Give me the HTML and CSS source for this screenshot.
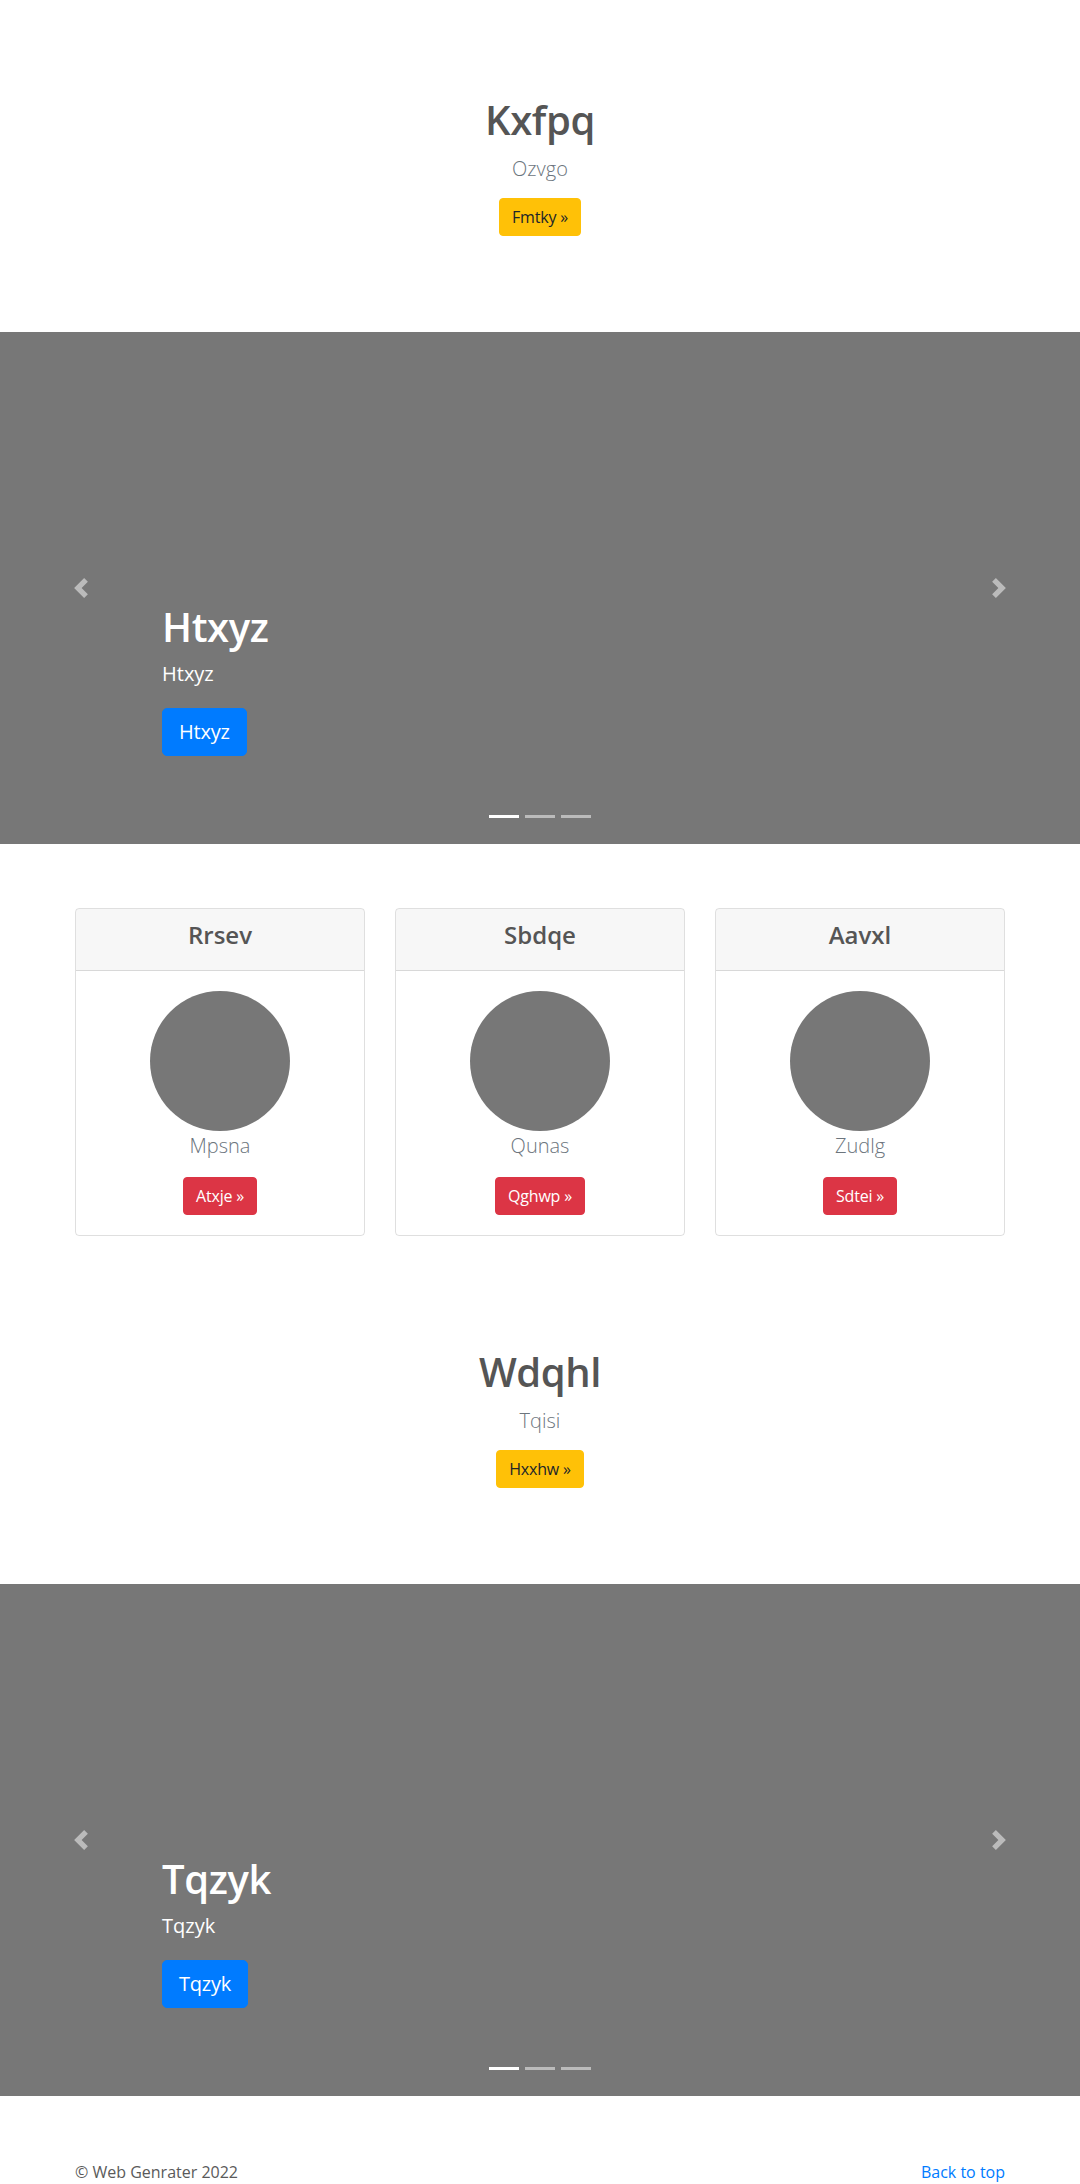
FILE: index.html
```html
<!DOCTYPE html>
<html lang="en">
<head>
<meta charset="utf-8">
<title>Web Genrater</title>
<link rel="stylesheet" href="styles.css">
</head>
<body>
<section class="hero">
  <h1 class="hero-title">Kxfpq</h1>
  <p class="hero-lead">Ozvgo</p>
  <a class="btn btn-warning" href="#">Fmtky &raquo;</a>
</section>

<section class="carousel">
  <div class="caption">
    <h1 class="caption-title">Htxyz</h1>
    <p class="caption-text">Htxyz</p>
    <div><a class="btn btn-lg btn-primary" href="#">Htxyz</a></div>
  </div>
  <a class="control control-prev" href="#"><svg viewBox="0 0 8 8" width="20" height="20"><path d="M5.25 0l-4 4 4 4 1.5-1.5L4.25 4l2.5-2.5L5.25 0z"/></svg></a>
  <a class="control control-next" href="#"><svg viewBox="0 0 8 8" width="20" height="20"><path d="M2.75 0l-1.5 1.5L3.75 4l-2.5 2.5L2.75 8l4-4-4-4z"/></svg></a>
  <ol class="indicators"><li class="active"></li><li></li><li></li></ol>
</section>

<section class="cards">
  <div class="container card-grid">
    <div class="card">
      <div class="card-header"><h4>Rrsev</h4></div>
      <div class="card-body">
        <svg class="avatar" viewBox="0 0 140 140" width="140" height="140"><circle cx="70" cy="70" r="70" fill="#777"/></svg>
        <p class="card-text">Mpsna</p>
        <a class="btn btn-danger" href="#">Atxje &raquo;</a>
      </div>
    </div>
    <div class="card">
      <div class="card-header"><h4>Sbdqe</h4></div>
      <div class="card-body">
        <svg class="avatar" viewBox="0 0 140 140" width="140" height="140"><circle cx="70" cy="70" r="70" fill="#777"/></svg>
        <p class="card-text">Qunas</p>
        <a class="btn btn-danger" href="#">Qghwp &raquo;</a>
      </div>
    </div>
    <div class="card">
      <div class="card-header"><h4>Aavxl</h4></div>
      <div class="card-body">
        <svg class="avatar" viewBox="0 0 140 140" width="140" height="140"><circle cx="70" cy="70" r="70" fill="#777"/></svg>
        <p class="card-text">Zudlg</p>
        <a class="btn btn-danger" href="#">Sdtei &raquo;</a>
      </div>
    </div>
  </div>
</section>

<section class="hero">
  <h1 class="hero-title">Wdqhl</h1>
  <p class="hero-lead">Tqisi</p>
  <a class="btn btn-warning" href="#">Hxxhw &raquo;</a>
</section>

<section class="carousel">
  <div class="caption">
    <h1 class="caption-title">Tqzyk</h1>
    <p class="caption-text">Tqzyk</p>
    <div><a class="btn btn-lg btn-primary" href="#">Tqzyk</a></div>
  </div>
  <a class="control control-prev" href="#"><svg viewBox="0 0 8 8" width="20" height="20"><path d="M5.25 0l-4 4 4 4 1.5-1.5L4.25 4l2.5-2.5L5.25 0z"/></svg></a>
  <a class="control control-next" href="#"><svg viewBox="0 0 8 8" width="20" height="20"><path d="M2.75 0l-1.5 1.5L3.75 4l-2.5 2.5L2.75 8l4-4-4-4z"/></svg></a>
  <ol class="indicators"><li class="active"></li><li></li><li></li></ol>
</section>

<footer class="footer">
  <div class="container footer-row">
    <p class="copy">&copy; Web Genrater 2022</p>
    <a class="top-link" href="#">Back to top</a>
  </div>
</footer>
</body>
</html>
```

FILE: styles.css
```css
* { box-sizing: border-box; }

body {
  margin: 0;
  font-family: "Segoe UI", "Open Sans", "Noto Sans", sans-serif;
  font-size: 16px;
  line-height: 1.5;
  color: #5a5a5a;
  background: #fff;
}

a { text-decoration: none; }

.container {
  width: 930px;
  margin: 0 auto;
}

/* Buttons */
.btn {
  display: inline-block;
  font-size: 16px;
  line-height: 24px;
  padding: 6px 12px;
  border: 1px solid transparent;
  border-radius: 4px;
  font-weight: 400;
  letter-spacing: -0.2px;
}
.btn-lg {
  font-size: 20px;
  line-height: 30px;
  padding: 8px 16px;
  border-radius: 5px;
}
.btn-warning { background: #ffc107; border-color: #ffc107; color: #212529; }
.btn-primary { background: #007bff; border-color: #007bff; color: #fff; }
.btn-danger { background: #dc3545; border-color: #dc3545; color: #fff; }

/* Hero */
.hero {
  display: flex;
  flex-direction: column;
  align-items: center;
  padding: 96px 0 96px;
  text-align: center;
}
.hero-title {
  margin: 0 0 10px;
  font-size: 40px;
  line-height: 48px;
  font-weight: 600;
  letter-spacing: -0.4px;
  color: #555;
}
.hero-lead {
  margin: 0 0 14px;
  font-size: 20px;
  line-height: 30px;
  font-weight: 300;
  color: #6c757d;
}

/* Carousel */
.carousel {
  position: relative;
  height: 512px;
  background: #777;
  display: flex;
  flex-direction: column;
  justify-content: flex-end;
  padding: 0 15% 88px;
}
.caption { color: #fff; position: relative; z-index: 2; }
.caption-title {
  margin: 0 0 8px;
  font-size: 40px;
  line-height: 48px;
  font-weight: 600;
  letter-spacing: -0.4px;
}
.caption-text {
  margin: 0 0 19px;
  font-size: 20px;
  line-height: 30px;
}
.control {
  position: absolute;
  top: 0;
  bottom: 0;
  width: 15%;
  display: flex;
  align-items: center;
  justify-content: center;
  opacity: 0.5;
}
.control svg { fill: #fff; display: block; }
.control-prev { left: 0; }
.control-next { right: 0; }
.indicators {
  position: absolute;
  left: 0;
  right: 0;
  bottom: 0;
  margin: 0 0 16px;
  padding: 0;
  list-style: none;
  display: flex;
  justify-content: center;
  z-index: 3;
}
.indicators li {
  width: 30px;
  height: 23px;
  margin: 0 3px;
  border-top: 10px solid transparent;
  border-bottom: 10px solid transparent;
  background: #fff;
  background-clip: padding-box;
  opacity: 0.5;
}
.indicators li.active { opacity: 1; }

/* Cards */
.cards {
  padding: 64px 0 16px;
}
.card-grid {
  display: grid;
  grid-template-columns: repeat(3, 1fr);
  column-gap: 30px;
}
.card {
  border: 1px solid rgba(0, 0, 0, 0.125);
  border-radius: 4px;
  text-align: center;
  overflow: hidden;
}
.card-header {
  background: rgba(0, 0, 0, 0.03);
  border-bottom: 1px solid rgba(0, 0, 0, 0.125);
  padding: 12px 20px;
}
.card-header h4 {
  margin: 0 0 8px;
  font-size: 24px;
  line-height: 28.8px;
  font-weight: 600;
  color: #555;
}
.card-body {
  padding: 20px;
  display: flex;
  flex-direction: column;
  align-items: center;
}
.avatar { display: block; }
.card-text {
  margin: 0 0 16px;
  font-size: 20px;
  line-height: 30px;
  font-weight: 300;
  color: #6c757d;
}

/* Footer */
.footer {
  padding: 64px 0 0;
}
.footer-row {
  display: flex;
  justify-content: space-between;
  align-items: flex-start;
}
.copy { margin: 0 0 16px; }
.top-link { color: #007bff; }
```
